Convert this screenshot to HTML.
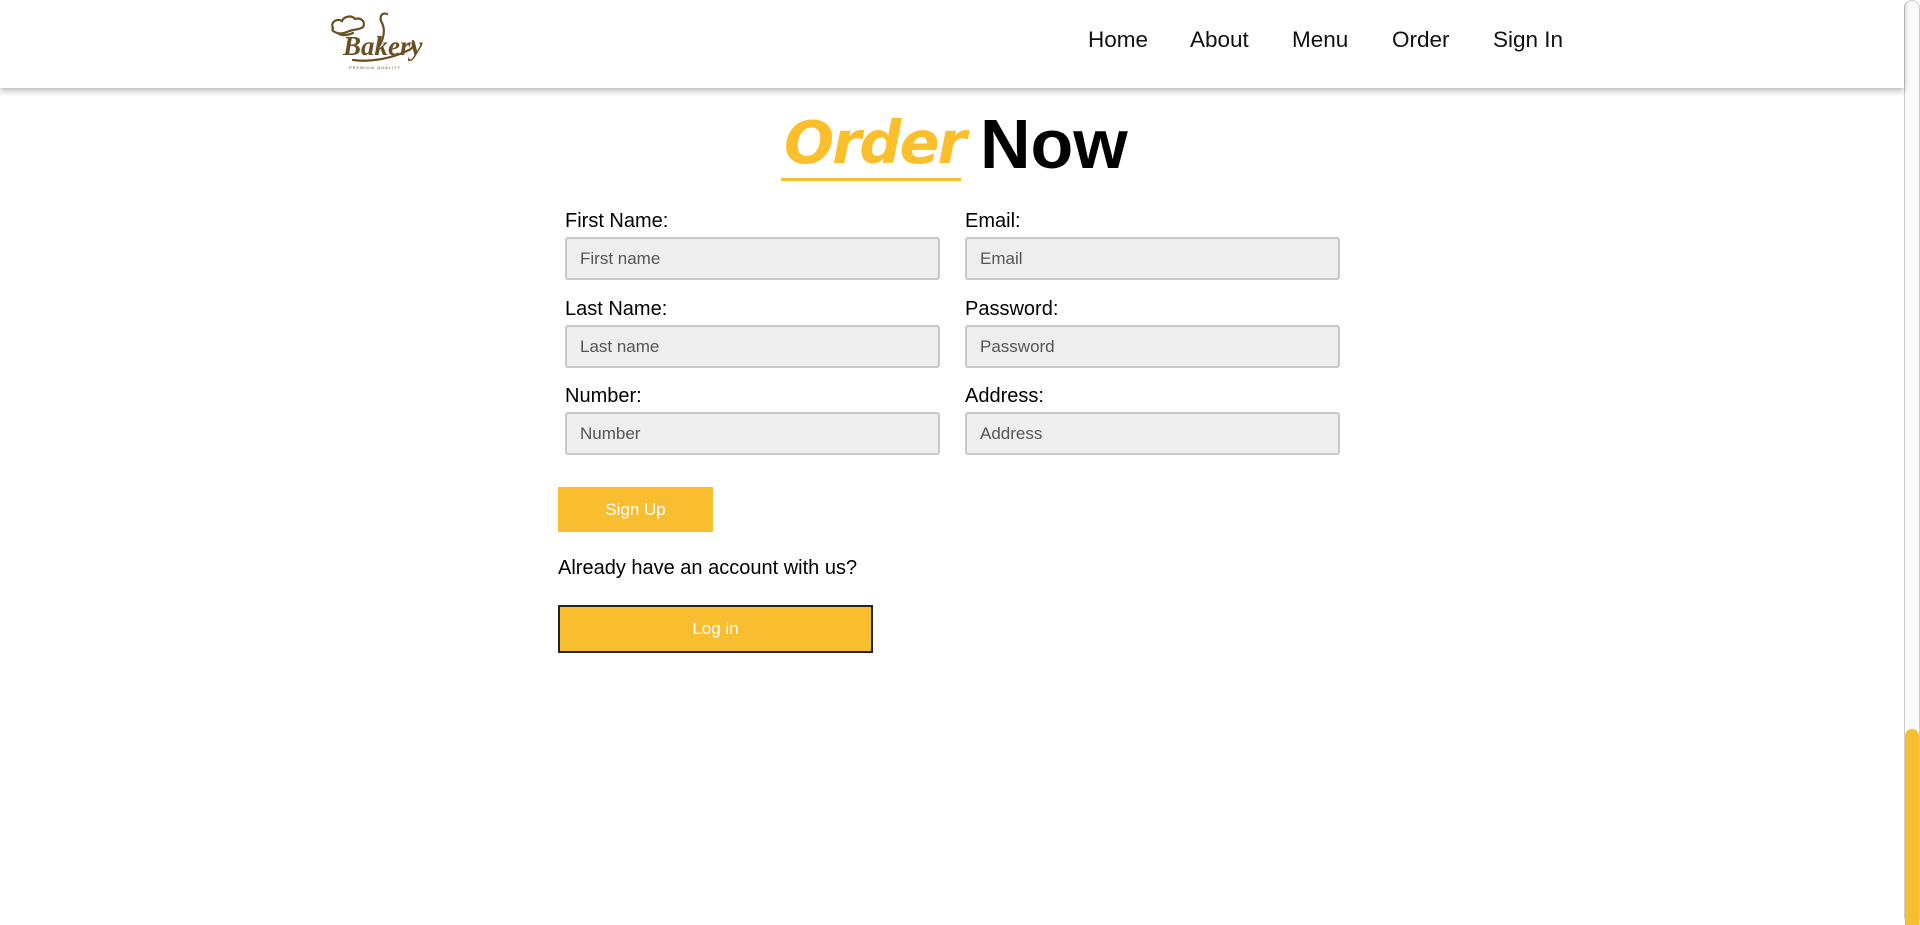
<!DOCTYPE html>
<html><head><meta charset="utf-8"><style>
*{box-sizing:border-box;margin:0;padding:0}
html,body{width:1920px;height:925px;overflow:hidden;background:#fff;font-family:"Liberation Sans",Arial,sans-serif;position:relative}
.hdr{position:absolute;left:0;top:0;width:1904px;height:88px;background:#fff;box-shadow:0 3px 6px rgba(0,0,0,.28);z-index:2}
.nav a{position:absolute;top:27px;font-size:22.5px;color:#111;text-decoration:none}
.t{position:absolute;white-space:nowrap}
.lbl{position:absolute;font-size:20px;color:#000}
.inp{position:absolute;width:375px;height:43px;background:#eee;border:2px solid #c8c8c8;border-radius:3px;font-size:17px;color:#555;padding:10px 0 0 13px}
.sb{position:absolute;left:1904px;top:0;width:16px;height:925px;background:#fafafa;border:1px solid #ccc;border-radius:8px}
.th{position:absolute;left:1905px;top:729px;width:14px;height:196px;background:#f9be2f;border-radius:7px 7px 0 0}
</style></head><body>
<div class="hdr">
<svg style="position:absolute;left:325px;top:8px" width="98" height="68" viewBox="0 0 98 68">
<g fill="none" stroke="#6b4f24" stroke-width="2.2" stroke-linecap="round">
<path d="M8 20c-3-6 4-10 9-7 2-5 10-6 13-2 6-2 11 3 8 8-3 3-10 2-16 5-5 2-9 2-12 0-3-1-3-3-2-4z"/>
<path d="M14 26c4 2 10 1 14-1"/>
<path d="M62 6c-6-2-8 4-5 9 3 6 2 14-2 22"/>
<path d="M28 52c14 2 36 0 56-10 4-2 6-6 4-9"/>
</g>
<text x="18" y="47" font-size="27" font-style="italic" font-weight="bold" fill="#6b4f24" font-family="Liberation Serif">Bakery</text>
<text x="24" y="61" font-size="4" fill="#6b4f24" font-family="Liberation Sans" letter-spacing="1">PREMIUM QUALITY</text>
</svg>
<div class="nav">
<a style="left:1088px">Home</a><a style="left:1190px">About</a><a style="left:1292px">Menu</a><a style="left:1392px">Order</a><a style="left:1493px">Sign In</a>
</div>
</div>
<div class="t" style="left:784px;top:108px;font-size:59px;font-style:italic;font-weight:bold;color:#fbbf2b;font-family:'DejaVu Sans',sans-serif;letter-spacing:-2px">Order</div>
<div style="position:absolute;left:781px;top:178px;width:180px;height:3px;background:#fbbf2b"></div>
<div class="t" style="left:980px;top:104px;font-size:70px;font-weight:bold;color:#000">Now</div>

<div class="lbl" style="left:565px;top:210px">First Name:</div>
<div class="inp" style="left:565px;top:237px">First name</div>
<div class="lbl" style="left:965px;top:210px">Email:</div>
<div class="inp" style="left:965px;top:237px">Email</div>
<div class="lbl" style="left:565px;top:298px">Last Name:</div>
<div class="inp" style="left:565px;top:325px">Last name</div>
<div class="lbl" style="left:965px;top:298px">Password:</div>
<div class="inp" style="left:965px;top:325px">Password</div>
<div class="lbl" style="left:565px;top:385px">Number:</div>
<div class="inp" style="left:565px;top:412px">Number</div>
<div class="lbl" style="left:965px;top:385px">Address:</div>
<div class="inp" style="left:965px;top:412px">Address</div>

<div style="position:absolute;left:558px;top:487px;width:155px;height:45px;background:#f9be2f;color:#fff;font-size:17px;text-align:center;line-height:45px">Sign Up</div>
<div class="lbl" style="left:558px;top:557px">Already have an account with us?</div>
<div style="position:absolute;left:558px;top:605px;width:315px;height:48px;background:#f9be2f;border:2px solid #1c2733;color:#fff;font-size:17px;text-align:center;line-height:44px">Log in</div>

<div class="sb"></div><div class="th"></div>
</body></html>
